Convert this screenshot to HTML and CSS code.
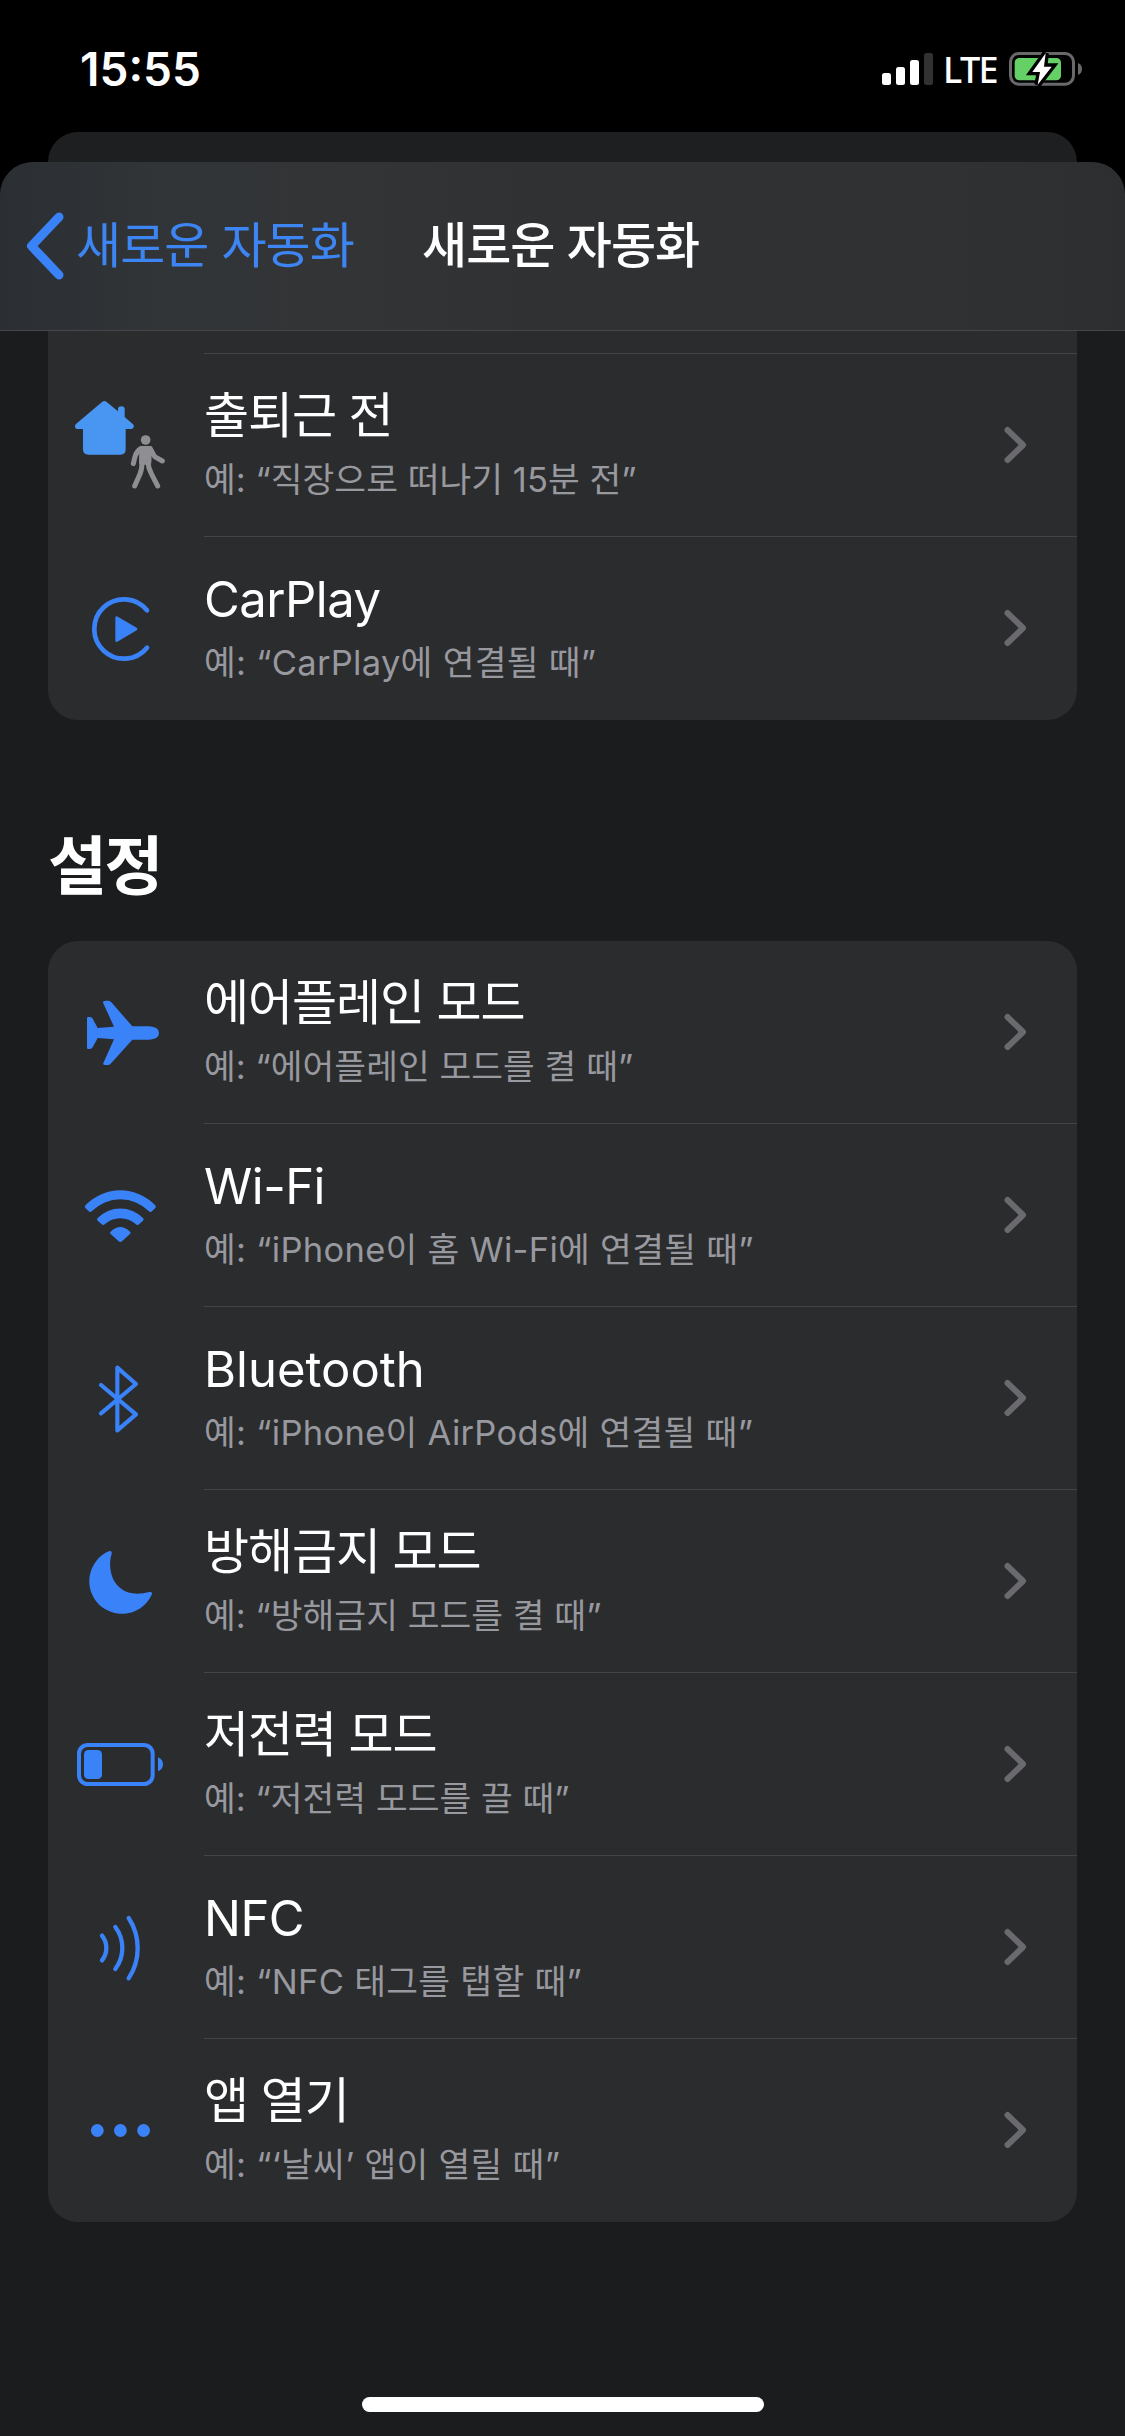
FILE: index.html
```html
<!DOCTYPE html>
<html lang="ko">
<head>
<meta charset="utf-8">
<title>새로운 자동화</title>
<link rel="stylesheet" href="styles.css">
</head>
<body>
<svg width="0" height="0" class="defs" aria-hidden="true">
  <symbol id="chevron" viewBox="0 0 24 40"><path d="M4.500 5L20 20L4.500 35" fill="none" stroke="#69696e" stroke-width="6" stroke-linecap="round" stroke-linejoin="round"/></symbol>
</svg>
<header class="status">
  <div class="time">15:55</div>
  <div class="indicators">
    <svg class="signal" width="51" height="32" viewBox="0 0 51 32"><g fill="#fff"><rect x="0" y="20" width="9" height="12" rx="2.500"/><rect x="14" y="14" width="9" height="18" rx="2.500"/><rect x="28" y="7" width="9" height="25" rx="2.500"/></g><rect x="42" y="0" width="9" height="32" rx="2.500" fill="#303133"/></svg>
    <span class="lte">LTE</span>
    <svg class="battery" width="75" height="36" viewBox="414 33 225 108">
      <rect x="421.500" y="40.500" width="189" height="92" rx="25" fill="none" stroke="#69696c" stroke-width="9"/>
      <path d="M624 69Q636 74 636 87Q636 100 624 105Z" fill="#69696c"/>
      <rect x="434" y="54" width="139" height="67" rx="14" fill="#65d065"/>
      <path d="M527 40L487 96H510L503 134L545 80H522Z" fill="#fff" stroke="#000" stroke-width="20" paint-order="stroke"/>
    </svg>
  </div>
</header>
<div class="behind"></div>
<main class="sheet">
  <nav class="nav">
    <svg class="back" width="40" height="70" viewBox="0 0 40 70"><path d="M33 6L5.500 35L33 64" fill="none" stroke="#3a82f7" stroke-width="9" stroke-linecap="round" stroke-linejoin="round"/></svg>
    <span class="back-label">새로운 자동화</span>
    <h1 class="nav-title">새로운 자동화</h1>
  </nav>
  <div class="content">
    <section class="card card-scrolled">
      <div class="peek"></div>
      <div class="row">
        <svg class="icon" viewBox="-36 -78 471 549">
          <path d="M126 66Q133 60 140 66L174 94V85Q175 79 184 79Q193 79 194 85V111L219 133Q226 140 216 147H197V208Q197 224 181 224H85Q69 224 69 208V147H52Q41 145 47 133Z" fill="#4895f2"/>
          <g fill="none" stroke="#8e8e93" stroke-width="15" stroke-linecap="round" stroke-linejoin="round">
            <circle cx="257" cy="180" r="14.500" fill="#8e8e93" stroke="none"/>
            <path d="M244 204H270L268 248H243Z" fill="#8e8e93" stroke-width="12"/>
            <path d="M242 206Q229 214 225 230L220 251M271 206L284 230L307 243M246 246Q246 268 240 282L224 318M264 246Q265 264 274 281L293 318"/>
          </g>
        </svg>
        <div class="text"><div class="title">출퇴근 전</div><div class="sub">예: “직장으로 떠나기 15분 전”</div></div>
      </div>
      <div class="row">
        <svg class="icon" viewBox="-36 471 471 549"><path d="M261 691A89 89 0 1 0 261 803" fill="none" stroke="#3a82f7" stroke-width="14" stroke-linecap="round"/><path d="M170 713L228 747L170 782Z" fill="#3a82f7" stroke="#3a82f7" stroke-width="8" stroke-linejoin="round"/></svg>
        <div class="text"><div class="title latin">CarPlay</div><div class="sub mixed">예: “CarPlay에 연결될 때”</div></div>
      </div>
    </section>
    <h2 class="heading">설정</h2>
    <section class="card">
      <div class="row">
        <svg class="icon" viewBox="-36 -117 471 549"><path d="M129 68Q128 62 137 62H146Q150 62 154 67L217 139H268Q297 141 297 159Q297 177 268 179H217L154 249Q150 255 145 255H135Q128 255 130 249L162 178L113 174L98 202Q95 207 90 207H84Q81 207 81 203V115Q81 111 85 111H91Q95 111 98 116L113 144L162 140Z" fill="#3a82f7"/></svg>
        <div class="text"><div class="title">에어플레인 모드</div><div class="sub">예: “에어플레인 모드를 켤 때”</div></div>
      </div>
      <div class="row">
        <svg class="icon" viewBox="-36 432 471 549"><g fill="#3a82f7"><path d="M77 675A145 145 0 0 1 285 675Q290 680 286 684L274 695Q271 698 267 694A120 120 0 0 0 95 694Q91 698 88 695L76 684Q72 680 77 675Z"/><path d="M113 714A95 95 0 0 1 249 714Q253 718 249 722L235 734Q231 737 228 733A70 70 0 0 0 134 733Q130 737 127 734L113 722Q109 718 113 714Z"/><path d="M152 755Q181 727 210 755Q214 758 210 762L186 784Q181 788 176 784L152 762Q148 758 152 755Z"/></g></svg>
        <div class="text"><div class="title latin">Wi-Fi</div><div class="sub mixed">예: “iPhone이 홈 Wi-Fi에 연결될 때”</div></div>
      </div>
      <div class="row">
        <svg class="icon" viewBox="-36 981 471 549"><path d="M123 1215L228 1303L172 1351V1163L228 1212L123 1300" fill="none" stroke="#3a82f7" stroke-width="12.500" stroke-linecap="round" stroke-linejoin="round"/></svg>
        <div class="text"><div class="title latin wide">Bluetooth</div><div class="sub mixed">예: “iPhone이 AirPods에 연결될 때”</div></div>
      </div>
      <div class="row">
        <svg class="icon" viewBox="-36 -120 471 549"><path d="M146 64Q157 61 155 72C142 110 153 190 232 191Q250 191 268 186Q279 184 275 194A98 98 0 1 1 146 64Z" fill="#3a82f7"/></svg>
        <div class="text"><div class="title">방해금지 모드</div><div class="sub">예: “방해금지 모드를 켤 때”</div></div>
      </div>
      <div class="row">
        <svg class="icon" viewBox="-36 429 471 549"><rect x="57" y="645" width="221" height="117" rx="26" fill="none" stroke="#3a82f7" stroke-width="12"/><rect x="72" y="660" width="54" height="87" rx="13" fill="#3a82f7"/><path d="M294 682Q309 688 309 703Q309 718 294 724Z" fill="#3a82f7"/></svg>
        <div class="text"><div class="title">저전력 모드</div><div class="sub">예: “저전력 모드를 끌 때”</div></div>
      </div>
      <div class="row">
        <svg class="icon" viewBox="-36 978 471 549"><path d="M126 1217A59 59 0 0 1 126 1291M166 1191A105 105 0 0 1 166 1317M206 1164A165 165 0 0 1 206 1345" fill="none" stroke="#3a82f7" stroke-width="13" stroke-linecap="round"/></svg>
        <div class="text"><div class="title latin">NFC</div><div class="sub mixed">예: “NFC 태그를 탭할 때”</div></div>
      </div>
      <div class="row">
        <svg class="icon" viewBox="0 0 157 183"><g fill="#3a82f7"><circle cx="49.300" cy="91.500" r="6.400"/><circle cx="72.400" cy="91.500" r="6.400"/><circle cx="95.600" cy="91.500" r="6.400"/></g></svg>
        <div class="text"><div class="title">앱 열기</div><div class="sub mixed">예: “‘날씨’ 앱이 열릴 때”</div></div>
      </div>
    </section>
  </div>
  <div class="home"></div>
</main>
<script src="rows.js"></script>
</body>
</html>
```
FILE: rows.js
```js
// Every row ends with the same disclosure chevron.
document.querySelectorAll('.row .text').forEach(function (text) {
  text.insertAdjacentHTML('beforeend', '<svg class="chevron"><use href="#chevron"/></svg>');
});
```
FILE: styles.css
```css
* { box-sizing: border-box; }
body {
  margin: 0;
  width: 1125px;
  height: 2436px;
  background: #000;
  color: #fff;
  font-family: Inter, "Noto Sans CJK KR", sans-serif;
  overflow: hidden;
}
svg { display: block; flex: none; }
.defs { display: none; }

.status { height: 132px; display: flex; justify-content: space-between; align-items: flex-start; padding: 43px 42px 0 80px; }
.time { font-size: 46px; font-weight: 600; line-height: 52px; }
.indicators { display: flex; align-items: flex-start; }
.signal { margin: 10px 10px 0 0; }
.lte { width: 65px; font: 500 36px/54px "Noto Sans", sans-serif; letter-spacing: -1.600px; }
.battery { margin-top: 8px; }

.behind { height: 30px; margin: 0 48px; background: #1e1f21; border-radius: 30px 30px 0 0; }
.sheet { height: 2274px; display: flex; flex-direction: column; background: #1b1c1e; border-radius: 33px 33px 0 0; overflow: hidden; }
.nav {
  height: 169px;
  flex: none;
  background: linear-gradient(90deg, #2b2f33 0, #313538 15%, #333436 30%, #303133 50%, #303133 85%, #2d2e30 100%);
  border-bottom: 1px solid #46474a;
  display: flex;
  align-items: center;
  padding-left: 26px;
}
.back-label, .nav-title { font-size: 49px; line-height: 72px; letter-spacing: -0.900px; white-space: nowrap; }
.back-label { width: 346px; margin-left: 10px; color: #3d85f2; }
.nav-title { font-weight: 500; margin: 0; }

.content { padding: 0 48px; flex: 1; }
.card { background: #2b2c2e; border-radius: 30px; }
.card-scrolled { border-radius: 0 0 30px 30px; }
.peek { height: 23px; margin-left: 156px; border-bottom: 1px solid #434447; }
.row { display: flex; height: 183px; }
.icon { width: 157px; height: 183px; margin-right: -1px; }
.text {
  flex: 1;
  display: grid;
  grid-template: 64px 62px / 1fr 24px;
  padding: 30px 50px 0 0;
  border-bottom: 1px solid #434447;
}
.row:last-child .text { border-bottom: 0; }
.title { font-size: 49px; line-height: 64px; letter-spacing: -1.100px; }
.title.latin { line-height: 66px; letter-spacing: -0.500px; }
.title.wide { letter-spacing: 0; }
.sub { font-size: 34.500px; line-height: 63px; color: #98989f; letter-spacing: 0.050px; }
.sub.mixed { letter-spacing: 0.300px; }
.chevron { grid-area: 1 / 2 / 3 / 3; width: 24px; height: 40px; margin-top: 41px; }
.heading { font-size: 64px; font-weight: 700; line-height: 98px; height: 96px; letter-spacing: -2.500px; margin: 97px 0 28px; }
.home { width: 402px; height: 15px; margin: 0 auto 24px; border-radius: 8px; background: #fff; }
```
